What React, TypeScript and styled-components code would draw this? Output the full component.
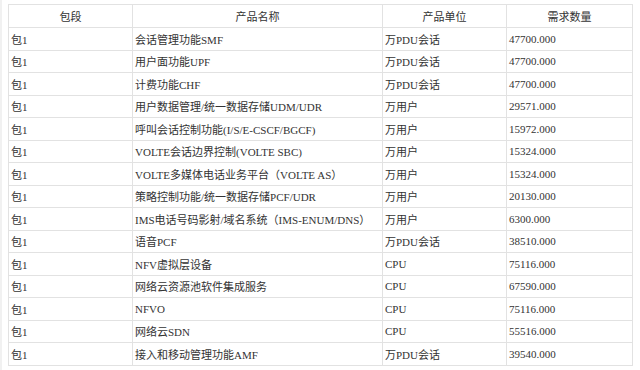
import * as React from 'react'
import styled, { createGlobalStyle } from 'styled-components'

const Global = createGlobalStyle`
  html, body {
    margin: 0;
    padding: 0;
    background: #fff;
  }
  body {
    font-family: "Liberation Serif", "Noto Sans CJK SC", serif;
    color: #333;
  }
`

const Page = styled.div`
  width: 640px;
  height: 370px;
  box-sizing: border-box;
  border-left: 2px solid #f1f1f1;
  padding: 4px 0 0 6px;
`

const Table = styled.table`
  width: 624px;
  border-collapse: collapse;
  table-layout: fixed;
  font-size: 11px;
`

const Col = styled.col<{ $w: number }>`
  width: ${p => p.$w}px;
`

const Head = styled.th`
  height: 22px;
  border: 1px solid #e2e2e2;
  font-weight: normal;
  text-align: center;
  padding: 0;
  color: #333;
`

const Cell = styled.td`
  height: 21.5px;
  border: 1px solid #e2e2e2;
  padding: 0 2px;
  white-space: nowrap;
  overflow: hidden;
`

const widths = [124, 250, 124, 126]
const headers = ['包段', '产品名称', '产品单位', '需求数量']

const rows: [string, string, string, string][] = [
  ['包1', '会话管理功能SMF', '万PDU会话', '47700.000'],
  ['包1', '用户面功能UPF', '万PDU会话', '47700.000'],
  ['包1', '计费功能CHF', '万PDU会话', '47700.000'],
  ['包1', '用户数据管理/统一数据存储UDM/UDR', '万用户', '29571.000'],
  ['包1', '呼叫会话控制功能(I/S/E-CSCF/BGCF)', '万用户', '15972.000'],
  ['包1', 'VOLTE会话边界控制(VOLTE SBC)', '万用户', '15324.000'],
  ['包1', 'VOLTE多媒体电话业务平台（VOLTE AS）', '万用户', '15324.000'],
  ['包1', '策略控制功能/统一数据存储PCF/UDR', '万用户', '20130.000'],
  ['包1', 'IMS电话号码影射/域名系统（IMS-ENUM/DNS）', '万用户', '6300.000'],
  ['包1', '语音PCF', '万PDU会话', '38510.000'],
  ['包1', 'NFV虚拟层设备', 'CPU', '75116.000'],
  ['包1', '网络云资源池软件集成服务', 'CPU', '67590.000'],
  ['包1', 'NFVO', 'CPU', '75116.000'],
  ['包1', '网络云SDN', 'CPU', '55516.000'],
  ['包1', '接入和移动管理功能AMF', '万PDU会话', '39540.000'],
]

export default function App() {
  return (
    <Page>
      <Global />
      <Table>
        <colgroup>
          {widths.map((w, i) => (
            <Col key={i} $w={w} />
          ))}
        </colgroup>
        <thead>
          <tr>
            {headers.map(h => (
              <Head key={h}>{h}</Head>
            ))}
          </tr>
        </thead>
        <tbody>
          {rows.map((r, i) => (
            <tr key={i}>
              {r.map((c, j) => (
                <Cell key={j}>{c}</Cell>
              ))}
            </tr>
          ))}
        </tbody>
      </Table>
    </Page>
  )
}
